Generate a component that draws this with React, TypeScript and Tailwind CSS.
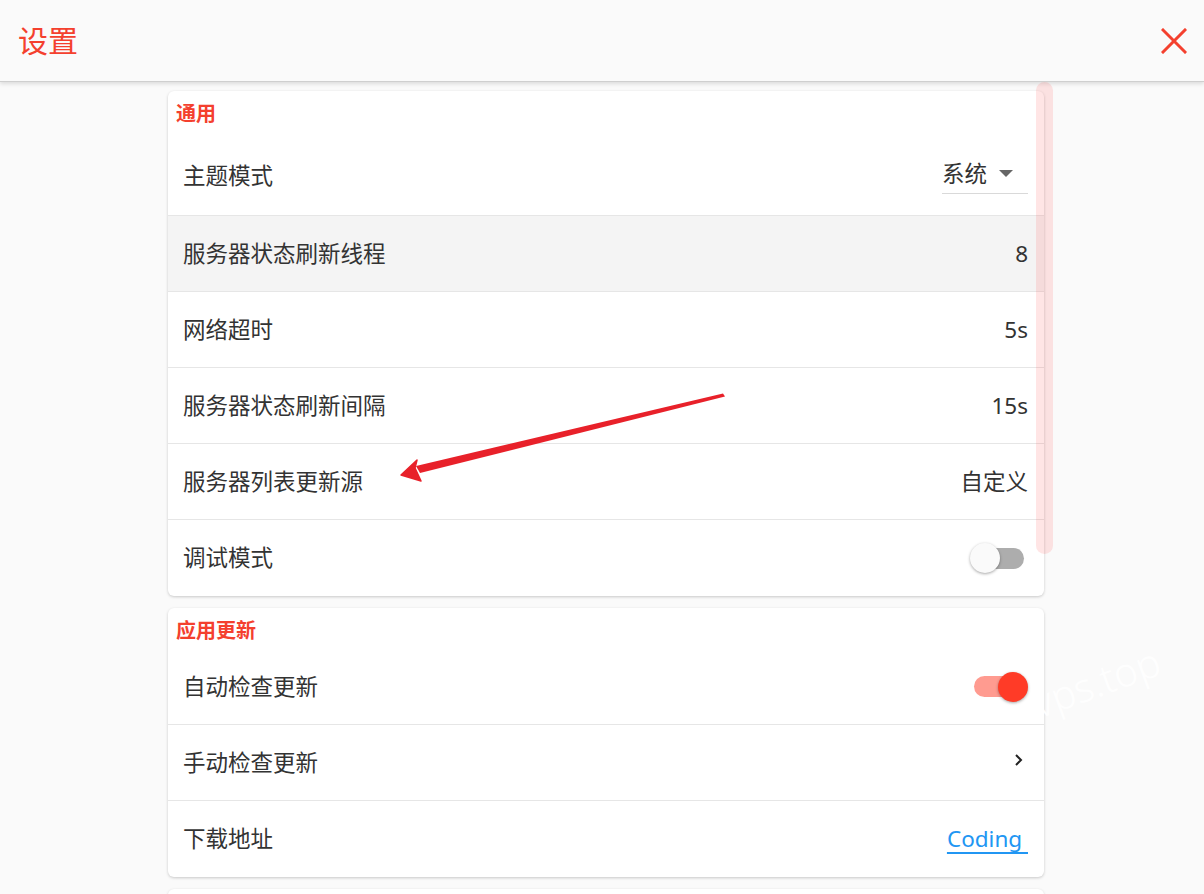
const RED = "text-[#f4402e]";

function Row({ label, children, shaded }: { label: string; children?: React.ReactNode; shaded?: boolean }) {
  return (
    <div className={`flex items-center justify-between h-[76px] pl-[15px] pr-[16px] border-b border-[#e6e6e6] last:border-b-0 ${shaded ? "bg-[#f4f4f4]" : ""}`}>
      <span className="text-[22.5px] text-[#333]">{label}</span>
      <div className="flex items-center text-[22.5px] text-[#333]">{children}</div>
    </div>
  );
}

function Toggle({ on }: { on?: boolean }) {
  return (
    <div className="relative w-[50px] h-[32px] mr-[4px] flex items-center">
      <div className={`w-[50px] h-[21px] rounded-full ${on ? "bg-[#ff9b90]" : "bg-[#adadad]"}`} />
      <div
        className={`absolute top-[1px] w-[30px] h-[30px] rounded-full shadow-[0_1px_3px_rgba(0,0,0,0.35)] ${on ? "right-[-4px] bg-[#ff3b27]" : "left-[-4px] bg-[#fafafa]"}`}
      />
    </div>
  );
}

export default function App() {
  return (
    <div
      className="relative w-[1204px] h-[894px] overflow-hidden bg-[#fafafa]"
      style={{ fontFamily: '"Noto Sans", "Noto Sans CJK SC", sans-serif' }}
    >
      <header className="h-[82px] flex items-center justify-between pl-[18px] pr-[16px] bg-[#fafafa] border-b border-[#cfcfcf] shadow-[0_2px_4px_rgba(0,0,0,0.12)]">
        <h1 className={`text-[30px] font-normal ${RED}`}>设置</h1>
        <svg width="26" height="26" viewBox="0 0 26 26" className="mr-[1px]">
          <path d="M2 2 L24 24 M24 2 L2 24" stroke="#f4402e" strokeWidth="3" strokeLinecap="square" />
        </svg>
      </header>

      <div className="ml-[168px] w-[876px] pt-[9px] flex flex-col gap-[12px]">
        <section className="bg-white rounded-[6px] shadow-[0_1px_3px_rgba(0,0,0,0.2)]">
          <h2 className={`h-[45px] pl-[8px] pt-[8px] text-[20px] font-bold ${RED}`}>通用</h2>
          <div className="flex items-center justify-between h-[80px] pl-[15px] pr-[16px] border-b border-[#e6e6e6]">
            <span className="text-[22.5px] text-[#333]">主题模式</span>
            <div className="flex items-center w-[86px] h-[36px] border-b border-[#d9d9d9] text-[22.5px] text-[#333] pb-[2px]">
              <span>系统</span>
              <svg width="14" height="8" viewBox="0 0 14 8" className="ml-[12px]">
                <path d="M0 0 H14 L7 7 Z" fill="#666" />
              </svg>
            </div>
          </div>
          <Row label="服务器状态刷新线程" shaded>8</Row>
          <Row label="网络超时">5s</Row>
          <Row label="服务器状态刷新间隔">15s</Row>
          <Row label="服务器列表更新源">自定义</Row>
          <Row label="调试模式">
            <Toggle />
          </Row>
        </section>

        <section className="bg-white rounded-[6px] shadow-[0_1px_3px_rgba(0,0,0,0.2)]">
          <h2 className={`h-[41px] pl-[8px] pt-[8px] text-[20px] font-bold ${RED}`}>应用更新</h2>
          <Row label="自动检查更新">
            <Toggle on />
          </Row>
          <Row label="手动检查更新">
            <svg width="10" height="14" viewBox="0 0 10 14" className="mr-[4px] mb-[6px]">
              <path d="M2 2 L7 7 L2 12" stroke="#222" strokeWidth="2" fill="none" />
            </svg>
          </Row>
          <Row label="下载地址">
            <span className="text-[#2196f3] underline underline-offset-[5px] decoration-[1.5px]">Coding&nbsp;</span>
          </Row>
        </section>

        <section className="bg-white rounded-[6px] shadow-[0_1px_3px_rgba(0,0,0,0.2)] h-[100px]" />
      </div>

      {/* scrollbar */}
      <div className="absolute left-[1036px] top-[82px] w-[17px] h-[472px] rounded-full bg-[#ff0000]/10" />

      {/* annotation arrow */}
      <svg className="absolute left-0 top-0 pointer-events-none" width="1204" height="894">
        <path d="M723 393.5 L725 396.5 L420 473 L416 466 Z" fill="#e8212a" />
        <path d="M401 475 L417 460 L415 468 L421 481 Z" fill="#e8212a" stroke="#e8212a" strokeWidth="1.5" strokeLinejoin="round" />
      </svg>

      {/* watermark */}
      <div className="absolute left-[1030px] top-[652px] text-[40px] font-light text-white/95 rotate-[-20deg] pointer-events-none">
        vps.top
      </div>
    </div>
  );
}
